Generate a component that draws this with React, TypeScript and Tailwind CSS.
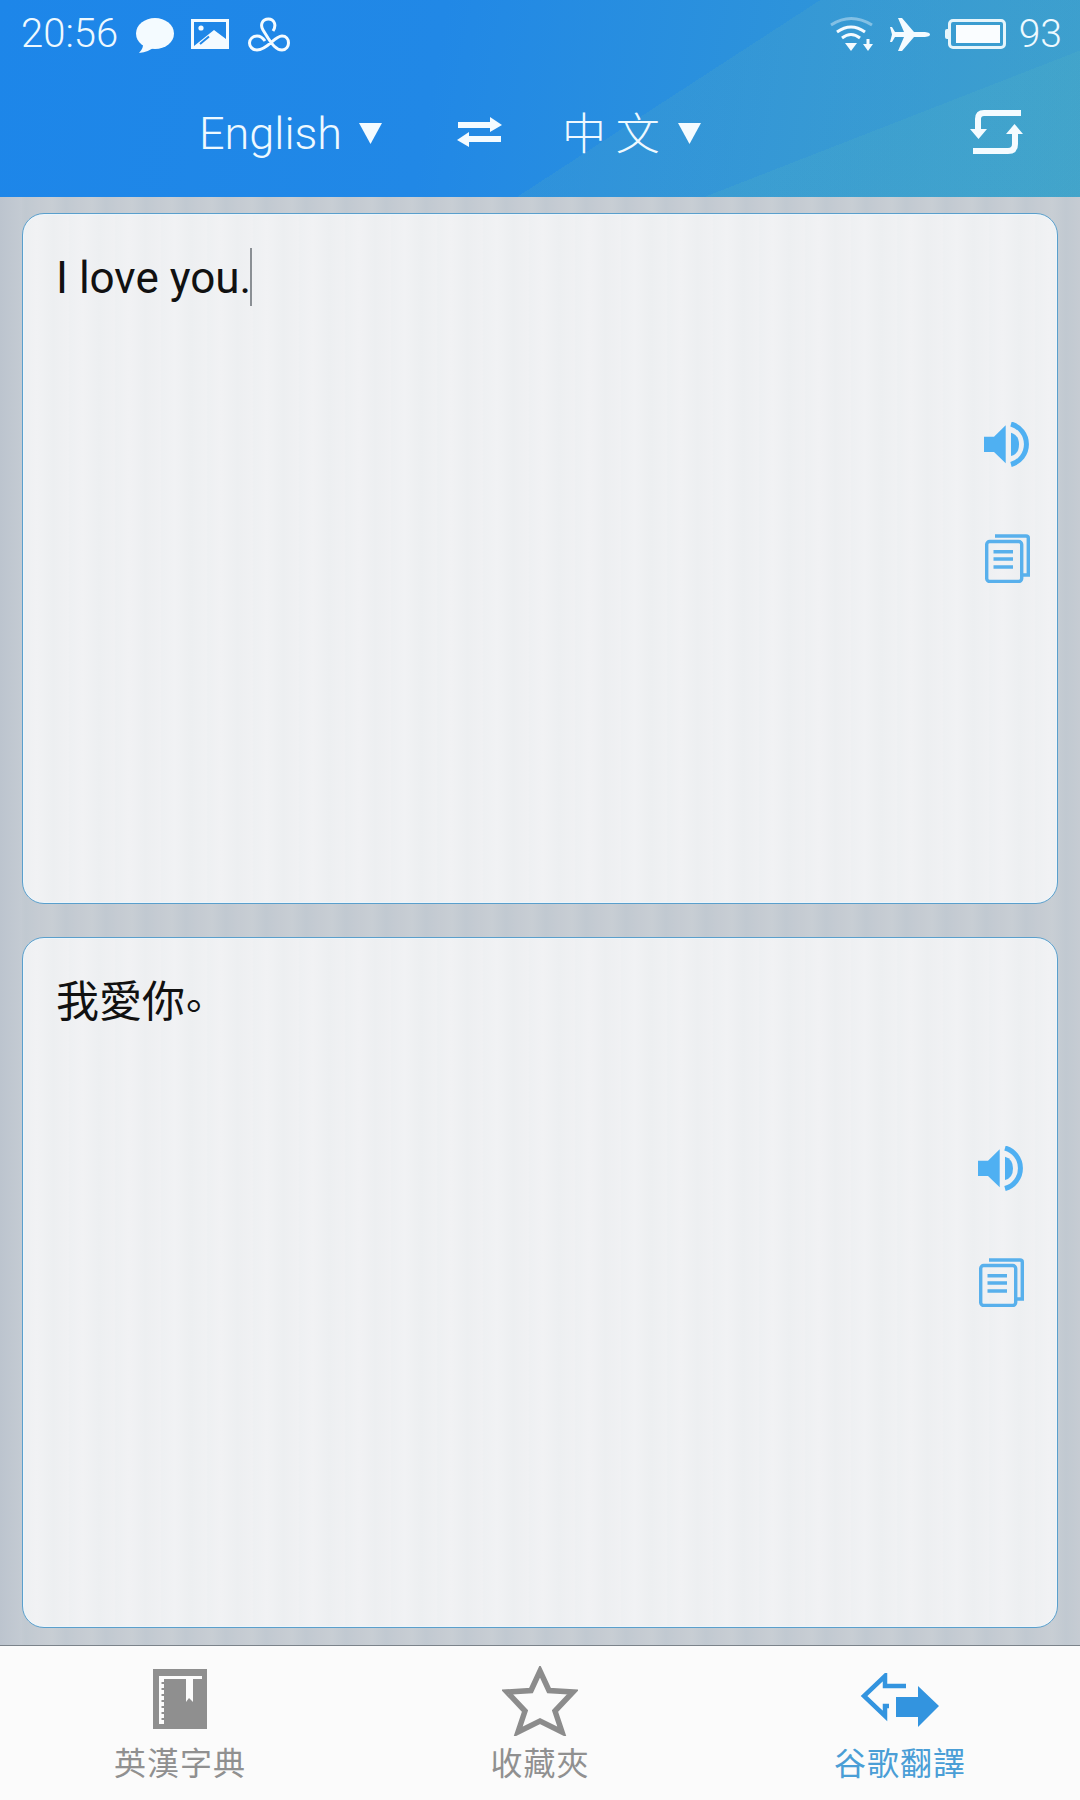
const cjk = "font-['Noto_Sans_CJK_TC','Noto_Sans_CJK_SC',sans-serif]";

function Speaker() {
  return (
    <svg width="46" height="46" viewBox="0 0 46 46" className="block">
      <path d="M0 14.7H10L21.7 3.3V41.3L10 30H0Z" fill="#4fb0f2" />
      <path d="M27 10.7Q35 13 35 22.5T27 34Z" fill="#4fb0f2" />
      <path d="M27 2A21 21 0 0 1 27 42.5" fill="none" stroke="#4fb0f2" strokeWidth="5" />
    </svg>
  );
}

function Copy() {
  return (
    <svg width="45" height="49" viewBox="0 0 45 49" className="block">
      <g fill="none" stroke="#58b0ec" strokeWidth="3.4">
        <rect x="1.7" y="7.5" width="35" height="40" rx="3" />
        <path d="M10 2H41Q43.3 2 43.3 4V41H38" />
        <path d="M8.5 17.7H28M8.5 25H28M8.5 33H28" />
      </g>
    </svg>
  );
}

function Triangle() {
  return (
    <svg width="23" height="21" viewBox="0 0 23 21" className="block">
      <path d="M0 0H23L11.5 21Z" fill="#f4fbff" />
    </svg>
  );
}

function Panel({ children, padRight }: { children: React.ReactNode; padRight: string }) {
  return (
    <section className="flex h-[691px] w-full rounded-[22px] border border-[#5a9fcc] bg-[#eef0f2] bg-[repeating-linear-gradient(90deg,#eef0f2_0px,#f1f2f4_14px,#edeff1_30px,#f0f1f3_46px)] shadow-[inset_0_0_0_1px_#ecf5fb]">
      <div className="min-w-0 flex-1 pl-[33px] pt-[32px]">{children}</div>
      <div className={`flex flex-col items-center gap-[66px] pt-[208px] ${padRight}`}>
        <Speaker />
        <Copy />
      </div>
    </section>
  );
}

function Tab({ icon, label, active }: { icon: React.ReactNode; label: string; active?: boolean }) {
  return (
    <div className="flex flex-col items-center pt-[20px]">
      <div className="flex h-[70px] items-center justify-center">{icon}</div>
      <div className={`mt-[4px] text-[32px] leading-[42px] tracking-[1px] ${cjk} ${active ? "text-[#4a9ed6]" : "text-[#909090]"}`}>
        {label}
      </div>
    </div>
  );
}

export default function App() {
  return (
    <div className="flex h-[1800px] w-[1080px] flex-col overflow-hidden bg-[#c3cad2] font-['Roboto',sans-serif]">
      <header className="h-[197px] shrink-0 bg-[linear-gradient(147deg,rgba(90,175,190,0)_59.3%,rgba(90,175,190,0.18)_59.3%),linear-gradient(158.7deg,rgba(90,190,190,0)_76.3%,rgba(90,190,190,0.16)_76.3%),linear-gradient(100deg,#1d86e9_0%,#2188e6_40%,#389dd0_100%)] text-[#eef9ff]">
        <div className="flex h-[68px] items-center pl-[21px] pr-[18px]">
          <span className="text-[40px] font-light leading-none">20:56</span>
          <svg width="38" height="35" viewBox="0 0 38 35" className="ml-[18px] mt-[2px]">
            <ellipse cx="19" cy="15.5" rx="19" ry="15.5" fill="#f4fbff" />
            <path d="M7 24Q8 30 3 35Q13 34 18 29Z" fill="#f4fbff" />
          </svg>
          <svg width="38" height="30" viewBox="0 0 38 30" className="ml-[17px]">
            <path fillRule="evenodd" d="M0 0H38V30H0ZM3 3V27L23 11L35 20V3Z" fill="#f4fbff" />
            <circle cx="10" cy="9" r="2.6" fill="#f4fbff" />
            <path d="M9 25L18 17.5" stroke="#1f87e8" strokeWidth="2" />
          </svg>
          <svg width="42" height="36" viewBox="0 0 42 36" fill="none" className="ml-[19px] mt-[1px]">
            <path
              d="M25 14C29 8 26 2 20.5 2C14 2 12 8 15 13L20 21C24 27 28 33 34 33C38.5 33 40.5 29 40.5 26C40.5 22 38 19 34 19C26 19 20 33 9 33C4 33 1.5 29 1.5 26C1.5 22 5 19 9 19C12 19 15 21 17 24"
              stroke="#f4fbff"
              strokeWidth="3"
            />
          </svg>
          <div className="ml-auto flex items-center">
            <svg width="44" height="36" viewBox="0 0 44 36" fill="none">
              <path d="M1 9Q21 -4 42 9" stroke="#f4fbff" strokeOpacity="0.4" strokeWidth="3" />
              <path d="M7 16Q21 6 35 16M12 22Q21 15 30 22" stroke="#f4fbff" strokeWidth="3" />
              <path d="M15 27H27L21 35ZM36.5 23H39.5V28H43L38 35L33 28H36.5Z" fill="#f4fbff" />
            </svg>
            <svg width="40" height="33" viewBox="0 0 40 33" className="ml-[16px]">
              <path
                d="M40 16.5C40 14.5 36 14 32 14H24L12 0H8L14 14H5L2 9H0L2 16.5L0 24H2L5 19H14L8 33H12L24 19H32C36 19 40 18.5 40 16.5Z"
                fill="#f4fbff"
              />
            </svg>
            <div className="ml-[15px] flex items-center">
              <div className="h-[10px] w-[3px] rounded-l-[2px] bg-[#e6f5fb]" />
              <div className="h-[30px] w-[58px] rounded-[5px] border-[3px] border-[#e6f5fb] p-[3px] pl-[5px]">
                <div className="h-full w-full bg-[#fafdff]" />
              </div>
            </div>
            <span className="ml-[13px] text-[39px] font-light leading-none">93</span>
          </div>
        </div>
        <div className="flex h-[128px] items-center pl-[199px] pr-[57px] pt-[3px]">
          <span className="text-[45px] font-light leading-none">English</span>
          <div className="ml-[17px]">
            <Triangle />
          </div>
          <svg width="45" height="30" viewBox="0 0 45 30" className="ml-[75px] mt-[-4px]">
            <path d="M1 5H33V0L45 8L33 15V11H1ZM44 19H12V15L0 23L12 30V25H44Z" fill="#f4fbff" />
          </svg>
          <span className={`ml-[60px] mt-[-5px] text-[44px] font-light leading-none ${cjk}`}>中 文</span>
          <div className="ml-[18px]">
            <Triangle />
          </div>
          <svg width="53" height="46" viewBox="0 0 53 46" fill="none" className="ml-auto mt-[-4px]">
            <path d="M51 4H14Q8 4 8 10V20M3 42H38Q45 42 45 35V25" stroke="#f4fbff" strokeWidth="6" />
            <path d="M0 20H17L8.5 30ZM36 25H53L44.5 15Z" fill="#f4fbff" />
          </svg>
        </div>
      </header>

      <main className="flex min-h-0 flex-1 flex-col gap-[33px] bg-[linear-gradient(90deg,#bcc4ce_0px,#c4cbd3_22px,transparent_22px),repeating-linear-gradient(90deg,#c5cbd2_0px,#c8ced4_12px,#c1c9d1_26px,#c6ccd3_40px)] px-[22px] pt-[16px]">
        <Panel padRight="pr-[27px]">
          <div className="flex items-center text-[#111] text-[44px] leading-[58px] font-['Roboto',sans-serif] mt-[3px]">
            <span>I love you.</span>
            <span className="ml-[-1px] mt-[-3px] h-[58px] w-[2px] bg-[#8a8f94]" />
          </div>
        </Panel>
        <Panel padRight="pr-[33px]">
          <div className="text-[#111] text-[43px] leading-[58px] font-['Noto_Sans_CJK_SC',sans-serif] mt-[-1px]">
            我愛你<span className="inline-block -translate-y-[8px] text-[40px] leading-none ml-[1px]">。</span>
          </div>
        </Panel>
      </main>

      <nav className="grid h-[155px] shrink-0 grid-cols-3 border-t border-[#7b838a] bg-[#fbfbfb]">
        <Tab
          label="英漢字典"
          icon={
            <svg width="54" height="60" viewBox="0 0 54 60" className="mb-[5px]">
              <rect width="54" height="60" fill="#8f8f8f" />
              <path
                d="M6 7H49V10H40V33L36 29L33 33V10H11V13H8.5V15H11V19H8.5V21H11V25H8.5V27H11V31H8.5V33H11V37H8.5V39H11V43H8.5V45H11V49H8.5V51H11V55H6Z"
                fill="#fbfbfb"
              />
            </svg>
          }
        />
        <Tab
          label="收藏夾"
          icon={
            <svg width="76" height="70" viewBox="0 0 76 70">
              <path
                d="M38 5L47 24.5L71 26L53 45L60 66L38 55L16 66L23 45L5 26L29 24.5Z"
                fill="none"
                stroke="#8c8c8c"
                strokeWidth="5.5"
              />
            </svg>
          }
        />
        <Tab
          active
          label="谷歌翻譯"
          icon={
            <svg width="80" height="56" viewBox="0 0 80 56">
              <path d="M46 13H25V3L4 23L25 43V33H29" fill="none" stroke="#3394df" strokeWidth="4.5" />
              <path d="M36 24H58V13L79 33L58 54V44H36Z" fill="#3394df" />
            </svg>
          }
        />
      </nav>
    </div>
  );
}
